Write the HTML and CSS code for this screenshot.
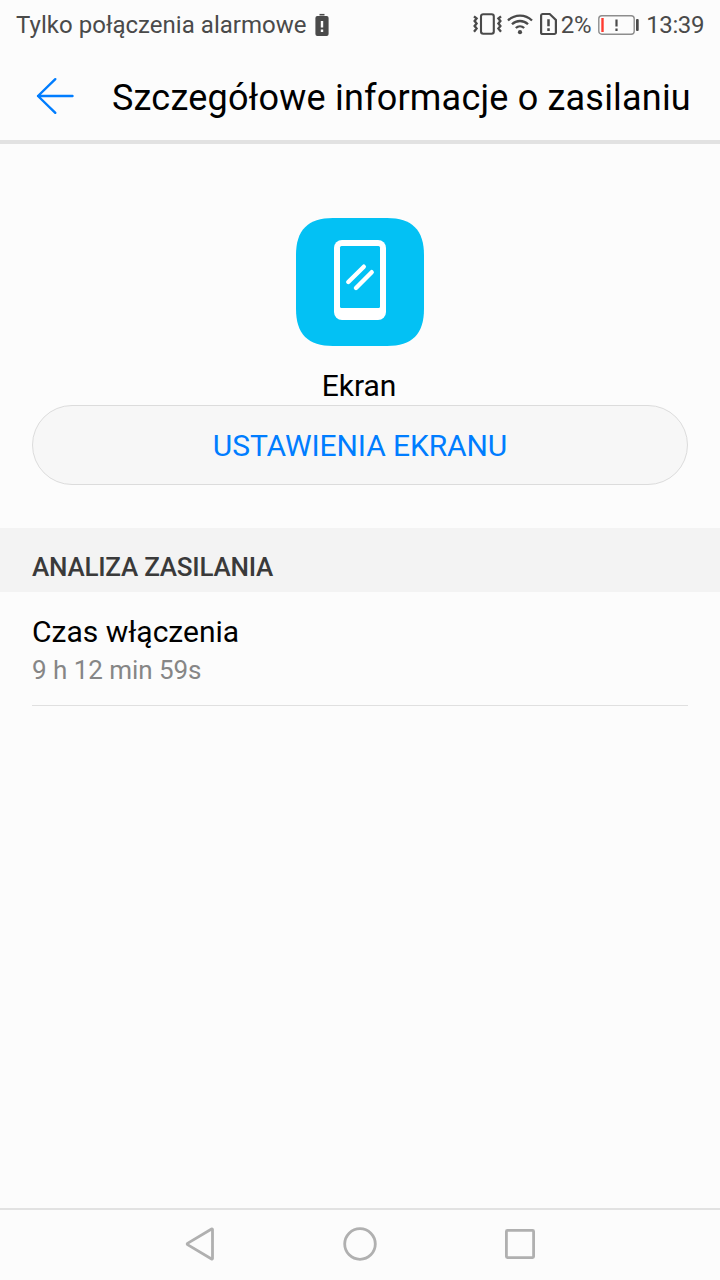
FILE: index.html
```html
<!DOCTYPE html>
<html lang="pl">
<head>
<meta charset="utf-8">
<title>Szczegółowe informacje o zasilaniu</title>
<link rel="stylesheet" href="styles.css">
</head>
<body>
<div class="screen">
  <div class="status">
    <span class="carrier">Tylko połączenia alarmowe</span>
    <svg class="low-icon" width="14" height="24" viewBox="0 0 14 24"><path d="M4.500 2.700h5" stroke="#4a4a4a" stroke-width="1.600"/><rect x=".4" y="4" width="13.200" height="20" rx="2" fill="#4a4a4a"/><path d="M7 9v6.600M7 17.600V20" stroke="#fcfcfc" stroke-width="2.400"/></svg>
    <div class="indicators">
      <svg class="vibrate" width="29" height="24" viewBox="0 0 29 24" fill="none" stroke="#4a4a4a" stroke-width="2.100"><rect x="8" y="2.200" width="12.800" height="19.600" rx="2.200"/><path d="M1 4.300L3.600 6.500 1.600 9l2 2.500L1.600 14l2 2.500L1 19.700M28 4.300L25.400 6.500 27.400 9l-2 2.500 2 2.500-2 2.500 2.600 3.200" stroke-width="2.300"/></svg>
      <svg class="wifi" width="26" height="24" viewBox="0 0 26 24" fill="none" stroke="#4a4a4a" stroke-width="2.300"><path d="M1 8.500a17 17 0 0 1 24 0M5 12.300a11.400 11.400 0 0 1 16 0M8.800 16a6.300 6.300 0 0 1 8.400 0"/><circle cx="13" cy="20.200" r="2.100" fill="#4a4a4a" stroke="none"/></svg>
      <svg class="sim" width="17" height="24" viewBox="0 0 17 24" fill="none" stroke="#4a4a4a" stroke-width="2.200"><path d="M2.600 2h7.100L15.900 8v12.400a1.600 1.600 0 0 1-1.600 1.600H2.700A1.600 1.600 0 0 1 1.100 20.400V3.600A1.600 1.600 0 0 1 2.600 2z"/><path d="M8.500 7.300v6.900M8.500 16.200v2.700" stroke-width="2.500"/></svg>
      <span class="percent">2%</span>
      <svg class="battery" width="41" height="24" viewBox="0 0 41 24"><rect x=".8" y="3.800" width="35.400" height="18.400" rx="3" fill="none" stroke="#8d8d8d" stroke-width="1.400"/><path d="M4.500 6v14" stroke="#ff3b30" stroke-width="2.400"/><path d="M18.500 7.500v7M18.500 16.600v2.400" stroke="#4a4a4a" stroke-width="2.200"/><rect x="38" y="7" width="2.700" height="12" rx="1" fill="#4a4a4a"/></svg>
      <span class="clock">13:39</span>
    </div>
  </div>
  <header class="bar">
    <svg class="back" width="40" height="40" viewBox="0 0 40 40" fill="none" stroke="#007dff" stroke-width="2.400" stroke-linecap="round" stroke-linejoin="round"><path d="M20.300 3.200L3 20l17.300 16.800M3 20h34.500"/></svg>
    <h1 class="title">Szczegółowe informacje o zasilaniu</h1>
  </header>
  <main class="content">
    <section class="hero">
      <svg class="app-icon" width="128" height="128" viewBox="0 0 128 128"><path d="M0 37C0 12 12 0 37 0H91C116 0 128 12 128 37V91C128 116 116 128 91 128H37C12 128 0 116 0 91Z" fill="#03c1f4"/><rect x="38" y="22" width="52" height="80" rx="8" fill="#fff"/><rect x="44" y="28" width="40" height="62" rx="1.500" fill="#03c1f4"/><path d="M52.300 64L67.800 48.700M60 70L75.700 54.200" stroke="#fff" stroke-width="4.400" stroke-linecap="round"/></svg>
      <div class="app-name">Ekran</div>
      <button class="settings">USTAWIENIA EKRANU</button>
    </section>
    <h2 class="section-title">ANALIZA ZASILANIA</h2>
    <div class="row">
      <div class="row-label">Czas włączenia</div>
      <div class="row-value">9 h 12 min 59s</div>
    </div>
  </main>
  <nav class="nav">
    <svg width="36" height="36" viewBox="0 0 36 36" class="nav-icon"><path d="M30.500 3.500v29a.6.600 0 0 1-.9.500L5.500 18.600a.7.700 0 0 1 0-1.200L29.600 3a.6.600 0 0 1 .9.500z"/></svg>
    <svg width="36" height="36" viewBox="0 0 36 36" class="nav-icon"><circle cx="18" cy="18" r="15.300"/></svg>
    <svg width="36" height="36" viewBox="0 0 36 36" class="nav-icon"><rect x="4.400" y="4.400" width="27.200" height="27.200" rx="1"/></svg>
  </nav>
</div>
</body>
</html>
```
FILE: styles.css
```css
* { box-sizing: border-box; }
body { margin: 0; font-family: Roboto, "Noto Sans", sans-serif; background: #fcfcfc; color: #000; }
.screen { width: 720px; height: 1280px; display: flex; flex-direction: column; overflow: hidden; }
svg { display: block; flex: none; }
.status { height: 48px; padding: 0 16px; display: flex; align-items: flex-start; color: #4a4a4a; font-size: 24px; line-height: 50px; white-space: nowrap; }
.carrier { letter-spacing: 0.03px; }
.low-icon { margin: 12px 0 0 8px; }
.indicators { display: flex; margin-left: auto; }
.vibrate, .wifi, .sim, .battery { margin-top: 12px; }
.wifi { margin-left: 5px; }
.sim { margin-left: 7px; }
.percent { margin-left: 4px; letter-spacing: -0.3px; }
.battery { margin-left: 7px; }
.clock { margin-left: 7px; letter-spacing: -0.4px; }
.bar { height: 96px; padding: 0 29px 0 35px; border-bottom: 4px solid #e2e2e2; display: flex; align-items: flex-start; }
.back { margin-top: 28px; }
.title { margin: 0 0 0 37px; font-size: 36px; font-weight: 400; line-height: 101px; letter-spacing: 0.2px; white-space: nowrap; }
.content { flex: 1; }
.hero { height: 384px; padding: 74px 32px 0; display: flex; flex-direction: column; align-items: center; }
.app-name { margin: 20px 2px 0 0; font-size: 30px; line-height: 40px; height: 39px; }
.settings { width: 100%; height: 80px; border: 1px solid #dcdcdc; border-radius: 40px; background: #f7f7f7; color: #007dff; font: 400 30px/76px Roboto, sans-serif; letter-spacing: -0.1px; padding: 1px 0 0; }
.section-title { margin: 0; height: 64px; padding: 14px 32px 0; background: #f3f3f3; color: #3a3a3a; font-size: 26px; font-weight: 500; line-height: 50px; letter-spacing: -0.24px; }
.row { height: 114px; margin: 0 32px; padding-top: 20px; border-bottom: 1px solid #e0e0e0; }
.row-label { font-size: 30px; line-height: 40px; }
.row-value { font-size: 26px; line-height: 36px; letter-spacing: -0.05px; color: #868686; }
.nav { height: 72px; padding-bottom: 2px; border-top: 2px solid #e2e2e2; display: flex; justify-content: center; align-items: center; gap: 124px; }
.nav-icon { fill: none; stroke: #b0b0b0; stroke-width: 2.8px; }
```
